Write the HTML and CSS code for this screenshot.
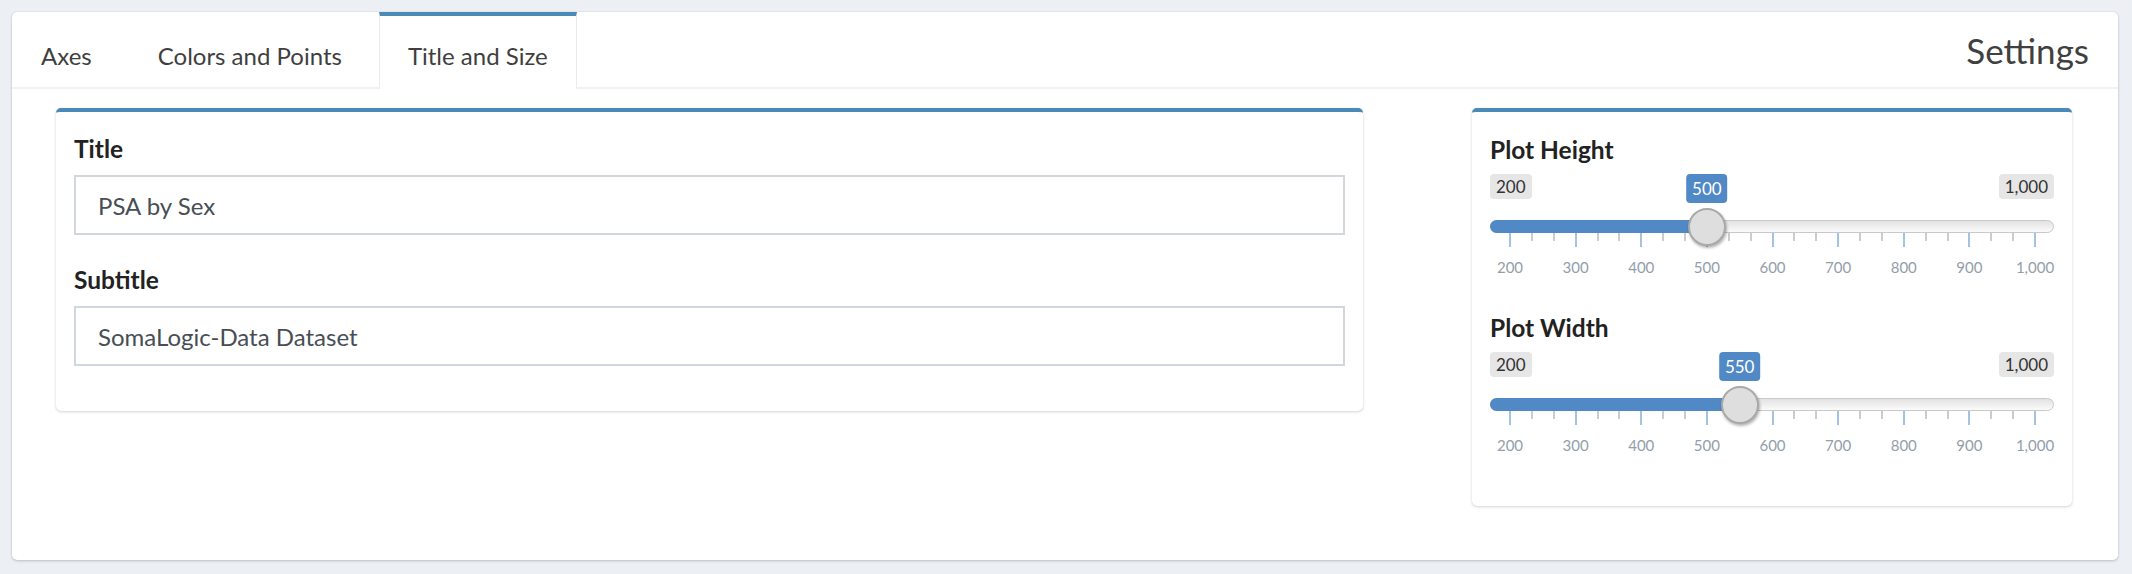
FILE: index.html
```html
<!DOCTYPE html>
<html lang="en">
<head>
<meta charset="utf-8">
<title>Settings</title>
<link rel="stylesheet" href="styles.css">
</head>
<body>
<div class="card">
  <div class="card-header">
    <ul class="tabs">
      <li class="tab">Axes</li>
      <li class="tab">Colors and Points</li>
      <li class="tab active">Title and Size</li>
    </ul>
    <h3 class="card-title">Settings</h3>
  </div>
  <div class="card-body">
    <div class="box box-left">
      <div class="form-group">
        <label class="form-label">Title</label>
        <input class="form-input" type="text" value="PSA by Sex">
      </div>
      <div class="form-group">
        <label class="form-label">Subtitle</label>
        <input class="form-input" type="text" value="SomaLogic-Data Dataset">
      </div>
    </div>
    <div class="box box-right">
      <div class="form-group slider-group">
        <label class="form-label">Plot Height</label>
        <div class="irs" style="--p:37.5%">
          <div class="irs-minmax"><span class="irs-badge">200</span><span class="irs-badge">1,000</span></div>
          <div class="irs-line">
            <div class="irs-rail">
              <div class="irs-bar"></div>
              <div class="irs-single">500</div>
              <div class="irs-handle"></div>
            </div>
          </div>
          <div class="irs-ticks">
            <span class="tick major"></span><span class="tick"></span><span class="tick"></span>
            <span class="tick major"></span><span class="tick"></span><span class="tick"></span>
            <span class="tick major"></span><span class="tick"></span><span class="tick"></span>
            <span class="tick major"></span><span class="tick"></span><span class="tick"></span>
            <span class="tick major"></span><span class="tick"></span><span class="tick"></span>
            <span class="tick major"></span><span class="tick"></span><span class="tick"></span>
            <span class="tick major"></span><span class="tick"></span><span class="tick"></span>
            <span class="tick major"></span><span class="tick"></span><span class="tick"></span>
            <span class="tick major"></span>
          </div>
          <div class="irs-labels">
            <span>200</span><span>300</span><span>400</span><span>500</span><span>600</span><span>700</span><span>800</span><span>900</span><span>1,000</span>
          </div>
        </div>
      </div>
      <div class="form-group slider-group">
        <label class="form-label">Plot Width</label>
        <div class="irs" style="--p:43.75%">
          <div class="irs-minmax"><span class="irs-badge">200</span><span class="irs-badge">1,000</span></div>
          <div class="irs-line">
            <div class="irs-rail">
              <div class="irs-bar"></div>
              <div class="irs-single">550</div>
              <div class="irs-handle"></div>
            </div>
          </div>
          <div class="irs-ticks">
            <span class="tick major"></span><span class="tick"></span><span class="tick"></span>
            <span class="tick major"></span><span class="tick"></span><span class="tick"></span>
            <span class="tick major"></span><span class="tick"></span><span class="tick"></span>
            <span class="tick major"></span><span class="tick"></span><span class="tick"></span>
            <span class="tick major"></span><span class="tick"></span><span class="tick"></span>
            <span class="tick major"></span><span class="tick"></span><span class="tick"></span>
            <span class="tick major"></span><span class="tick"></span><span class="tick"></span>
            <span class="tick major"></span><span class="tick"></span><span class="tick"></span>
            <span class="tick major"></span>
          </div>
          <div class="irs-labels">
            <span>200</span><span>300</span><span>400</span><span>500</span><span>600</span><span>700</span><span>800</span><span>900</span><span>1,000</span>
          </div>
        </div>
      </div>
    </div>
  </div>
</div>
</body>
</html>
```

FILE: styles.css
```css
* { box-sizing: border-box; }

html, body {
  margin: 0;
  padding: 0;
}

body {
  background: #ecf0f5;
  padding: 12px 14px 14px 12px;
  font-family: "Lato", "Open Sans", sans-serif;
  color: #212529;
}

.card {
  background: #fff;
  border-radius: 5px;
  height: 548px;
  box-shadow: 0 0 1px rgba(0, 0, 0, 0.13), 0 1px 3px rgba(0, 0, 0, 0.2);
}

.card-header {
  display: flex;
  align-items: stretch;
  height: 77px;
  border-bottom: 2px solid #f1f2f3;
}

.tabs {
  list-style: none;
  margin: 0;
  padding: 0;
  display: flex;
  gap: 8px;
}

.tab {
  padding: 27px 28px 0;
  font-size: 24px;
  line-height: 33px;
  color: #3f3f3f;
  border-left: 1px solid transparent;
  border-right: 1px solid transparent;
  white-space: nowrap;
}

.tab.active {
  border-top: 4px solid #4a89b8;
  border-left-color: #ebebeb;
  border-right-color: #ebebeb;
  padding-top: 23px;
  background: #fff;
  margin-bottom: -2px;
}

.card-title {
  margin: 0 0 0 auto;
  padding: 18px 29px 0 0;
  font-size: 35px;
  line-height: 40px;
  font-weight: 400;
  color: #404040;
}

.card-body {
  display: flex;
  justify-content: space-between;
  align-items: flex-start;
  padding: 19px 46px 0 44px;
}

.box {
  background: #fff;
  border-top: 4px solid #4a89b8;
  border-radius: 5px;
  box-shadow: 0 0 1px rgba(0, 0, 0, 0.14), 0 1px 3px rgba(0, 0, 0, 0.16);
}

.box-left {
  flex: 0 0 1307px;
  padding: 20px 18px 17px;
}

.box-right {
  flex: 0 0 600px;
  padding: 21px 18px 17px;
}

.form-group {
  margin-bottom: 28px;
}

.form-label {
  display: block;
  font-weight: 700;
  font-size: 24.5px;
  line-height: 33px;
  color: #222;
  margin-bottom: 10px;
}

.form-input {
  display: block;
  width: 100%;
  height: 60px;
  border: 2px solid #d2d6dd;
  border-radius: 0;
  padding: 0 22px;
  font-family: "Lato", "Open Sans", sans-serif;
  font-size: 24px;
  color: #474e55;
  background: #fff;
  outline: none;
}

.slider-group {
  margin-bottom: 34px;
}

.slider-group .form-label {
  margin-bottom: 8px;
}

/* ion range slider (shiny skin) */
.irs {
  font-size: 17px;
}

.irs-minmax {
  display: flex;
  justify-content: space-between;
  height: 25px;
}

.irs-badge {
  height: 25px;
  line-height: 25px;
  padding: 0 6px;
  border-radius: 4px;
  background: #e6e6e6;
  color: #333;
}

.irs-line {
  margin-top: 21px;
  height: 13px;
  border: 1px solid #c9c9c9;
  border-radius: 7px;
  background: linear-gradient(to bottom, #e2e2e2 0%, #fbfbfb 100%);
}

.irs-rail {
  position: relative;
  height: 100%;
  margin: 0 18px 0 19px;
}

.irs-bar {
  position: absolute;
  top: -1px;
  bottom: -1px;
  left: -20px;
  width: calc(var(--p) + 20px);
  background: #5089c6;
  border-radius: 7px 0 0 7px;
}

.irs-handle {
  position: absolute;
  left: var(--p);
  top: 50%;
  width: 38px;
  height: 38px;
  transform: translate(-50%, -50%);
  border-radius: 50%;
  background: #dedede;
  border: 2px solid #a9a9a9;
  box-shadow: 1px 2px 3px rgba(0, 0, 0, 0.3);
}

.irs-single {
  position: absolute;
  left: var(--p);
  top: -47px;
  transform: translateX(-50%);
  height: 29px;
  line-height: 29px;
  padding: 0 6px;
  border-radius: 4px;
  background: #5089c6;
  color: #fff;
  white-space: nowrap;
}

.irs-ticks {
  display: flex;
  justify-content: space-between;
  align-items: flex-start;
  margin: 0 18px 0 19px;
  height: 14px;
}

.tick {
  width: 2px;
  height: 8px;
  background: #cccccc;
}

.tick.major {
  height: 14px;
  background: #a3c3e3;
}

.irs-labels {
  display: flex;
  justify-content: space-between;
  margin: 10px -11px 0 -10px;
  font-size: 15px;
  line-height: 20px;
  color: #929eaa;
}

.irs-labels span {
  width: 60px;
  text-align: center;
}
```
